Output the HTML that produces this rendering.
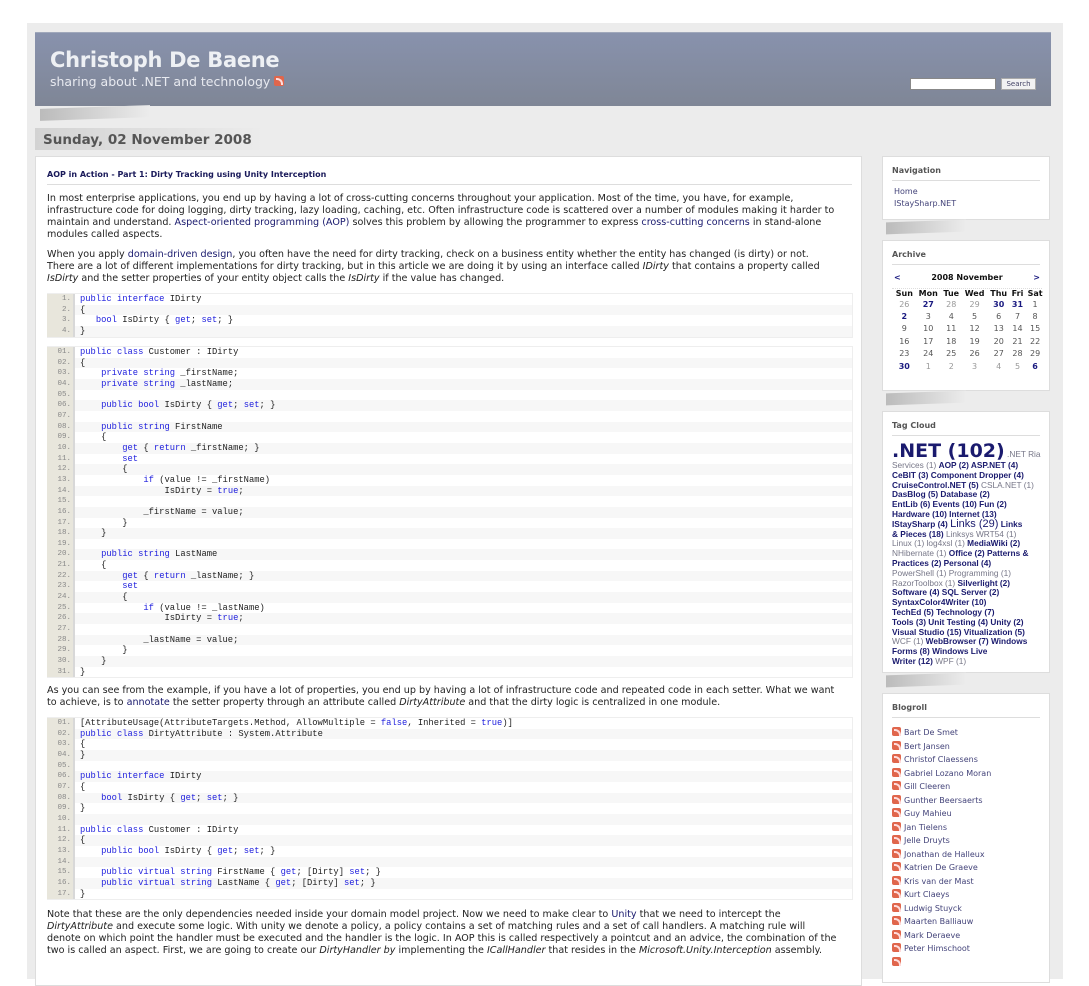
<!DOCTYPE html>
<html><head><meta charset="utf-8"><style>
*{margin:0;padding:0;box-sizing:border-box}
body{width:1089px;height:979px;overflow:hidden;background:#fff;font-family:"DejaVu Sans",Verdana,sans-serif;font-size:10px;color:#222}
#frame{position:absolute;left:27px;top:23px;width:1036px;height:956px;background:#ececec}
#hdr{position:absolute;left:35px;top:32px;width:1016px;height:74px;background:linear-gradient(#8892ad,#7f8696);border-top:1px solid #a0a8bb}
#hdr h1{position:absolute;left:15px;top:15px;font-size:21px;color:#eef0f4;font-weight:bold;letter-spacing:-.3px}
#hdr .sub{position:absolute;left:15px;top:41px;font-size:12.5px;color:#e8eaf0}
.rss{display:inline-block;width:10px;height:10px;background:#e0664c;border-radius:2px;vertical-align:0;position:relative}
.rss:after{content:"";position:absolute;left:2px;top:2px;width:5px;height:5px;border-top:2px solid #fdd;border-right:2px solid #fdd;border-radius:0 6px 0 0}
#sbox{position:absolute;left:910px;top:78px;width:86px;height:12px;background:#fff;border:1px solid #888}
#sbtn{position:absolute;left:1001px;top:78px;width:35px;height:12px;background:#f2f2f2;border:1px solid #aaa;font-size:7px;color:#446;text-align:center;line-height:10px}
.shadow{position:absolute;height:12px;background:linear-gradient(90deg,#bbb,#ddd 70%,#ececec);transform:skewY(-2deg)}
#date{position:absolute;left:35px;top:128px;width:230px;height:22px;background:linear-gradient(90deg,#d3d3d3,#ececec);font-weight:bold;font-size:13.5px;color:#555;padding:4px 0 0 8px}
#post{position:absolute;left:35px;top:156px;width:827px;height:830px;background:#fff;border:1px solid #ddd}
#post h2{position:absolute;left:11px;top:13px;font-size:8px;color:#1a1a5a;font-weight:bold}
#post hr{position:absolute;left:11px;top:27px;width:805px;border:0;border-top:1px solid #ddd}
.p{position:absolute;left:11px;white-space:nowrap;line-height:12px;font-size:9.6px;color:#222}
.p a{color:#1a1a6e;text-decoration:none}
.code{position:absolute;left:11px;width:806px;background:#e8e6dc;border:1px solid #eee;border-left:none;font-family:"Liberation Mono",monospace;font-size:8.8px}
.code div{height:10.67px;line-height:10.67px;white-space:pre;padding-left:33px;position:relative;background:#fff}
.code div:nth-child(even){background:#f7f7f7}
.code div i{position:absolute;left:0;width:28px;padding-right:2px;text-align:right;font-style:normal;color:#888;font-size:7.5px;background:#e8e6dc;height:100%;border-right:2px solid #d8d8d8}
.k{color:#1d1ddd}
.side{position:absolute;left:882px;width:168px;background:#fff;border:1px solid #ddd}
.side h3{font-size:8px;color:#555;font-weight:bold;margin:9px 9px 0;padding-bottom:5px;border-bottom:1px solid #ddd}
.side a{color:#44447a;text-decoration:none}
.nav{font-size:8px;line-height:12px;padding:5px 11px}
.cal{font-size:8px;margin:6px 9px 0;width:150px}
.cal table{border-collapse:collapse;width:152px;margin-left:1px}
.cal td{text-align:center;height:12.4px;color:#555;font-size:8px;padding:0}
.cal th{font-size:8px;color:#111}
.b{color:#1a1a80!important;font-weight:bold}
.g{color:#999!important}
.tags{padding:5px 9px;font-family:"Liberation Sans",Arial,sans-serif;font-size:8.3px;line-height:9.8px;color:#1a1a6e;white-space:nowrap}
.tags b{color:#1a1a6e}
.tags span{color:#778;font-weight:normal}
.blog{padding:8px 9px;font-size:8px;line-height:13.5px}
.blog div{white-space:nowrap;color:#44447a}
.blog .rss{width:9px;height:9px;margin-right:3px;vertical-align:-1px}
</style></head><body>
<div id="frame"></div>
<div id="hdr"><h1>Christoph De Baene</h1><div class="sub">sharing about .NET and technology <span class="rss"></span></div></div>
<div id="sbox"></div><div id="sbtn">Search</div>
<div class="shadow" style="left:40px;top:107px;width:110px"></div>
<div id="date">Sunday, 02 November 2008</div>
<div id="post">
<h2>AOP in Action - Part 1: Dirty Tracking using Unity Interception</h2><hr>
<div class="p" style="top:36px">In most enterprise applications, you end up by having a lot of cross-cutting concerns throughout your application. Most of the time, you have, for example,<br>infrastructure code for doing logging, dirty tracking, lazy loading, caching, etc. Often infrastructure code is scattered over a number of modules making it harder to<br>maintain and understand. <a>Aspect-oriented programming (AOP)</a> solves this problem by allowing the programmer to express <a>cross-cutting concerns</a> in stand-alone<br>modules called aspects.</div>
<div class="p" style="top:92px">When you apply <a>domain-driven design</a>, you often have the need for dirty tracking, check on a business entity whether the entity has changed (is dirty) or not.<br>There are a lot of different implementations for dirty tracking, but in this article we are doing it by using an interface called <i>IDirty</i> that contains a property called<br><i>IsDirty</i> and the setter properties of your entity object calls the <i>IsDirty</i> if the value has changed.</div>
<div class="code" style="top:136px">
<div><i>1.</i><span class="k">public interface</span> IDirty</div>
<div><i>2.</i>{</div>
<div><i>3.</i>   <span class="k">bool</span> IsDirty { <span class="k">get</span>; <span class="k">set</span>; }</div>
<div><i>4.</i>}</div>
</div>
<div class="code" style="top:189px">
<div><i>01.</i><span class="k">public class</span> Customer : IDirty</div>
<div><i>02.</i>{</div>
<div><i>03.</i>    <span class="k">private string</span> _firstName;</div>
<div><i>04.</i>    <span class="k">private string</span> _lastName;</div>
<div><i>05.</i></div>
<div><i>06.</i>    <span class="k">public bool</span> IsDirty { <span class="k">get</span>; <span class="k">set</span>; }</div>
<div><i>07.</i></div>
<div><i>08.</i>    <span class="k">public string</span> FirstName</div>
<div><i>09.</i>    {</div>
<div><i>10.</i>        <span class="k">get</span> { <span class="k">return</span> _firstName; }</div>
<div><i>11.</i>        <span class="k">set</span></div>
<div><i>12.</i>        {</div>
<div><i>13.</i>            <span class="k">if</span> (value != _firstName)</div>
<div><i>14.</i>                IsDirty = <span class="k">true</span>;</div>
<div><i>15.</i></div>
<div><i>16.</i>            _firstName = value;</div>
<div><i>17.</i>        }</div>
<div><i>18.</i>    }</div>
<div><i>19.</i></div>
<div><i>20.</i>    <span class="k">public string</span> LastName</div>
<div><i>21.</i>    {</div>
<div><i>22.</i>        <span class="k">get</span> { <span class="k">return</span> _lastName; }</div>
<div><i>23.</i>        <span class="k">set</span></div>
<div><i>24.</i>        {</div>
<div><i>25.</i>            <span class="k">if</span> (value != _lastName)</div>
<div><i>26.</i>                IsDirty = <span class="k">true</span>;</div>
<div><i>27.</i></div>
<div><i>28.</i>            _lastName = value;</div>
<div><i>29.</i>        }</div>
<div><i>30.</i>    }</div>
<div><i>31.</i>}</div>
</div>
<div class="p" style="top:528px">As you can see from the example, if you have a lot of properties, you end up by having a lot of infrastructure code and repeated code in each setter. What we want<br>to achieve, is to <a>annotate</a> the setter property through an attribute called <i>DirtyAttribute</i> and that the dirty logic is centralized in one module.</div>
<div class="code" style="top:560px">
<div><i>01.</i>[AttributeUsage(AttributeTargets.Method, AllowMultiple = <span class="k">false</span>, Inherited = <span class="k">true</span>)]</div>
<div><i>02.</i><span class="k">public class</span> DirtyAttribute : System.Attribute</div>
<div><i>03.</i>{</div>
<div><i>04.</i>}</div>
<div><i>05.</i></div>
<div><i>06.</i><span class="k">public interface</span> IDirty</div>
<div><i>07.</i>{</div>
<div><i>08.</i>    <span class="k">bool</span> IsDirty { <span class="k">get</span>; <span class="k">set</span>; }</div>
<div><i>09.</i>}</div>
<div><i>10.</i></div>
<div><i>11.</i><span class="k">public class</span> Customer : IDirty</div>
<div><i>12.</i>{</div>
<div><i>13.</i>    <span class="k">public bool</span> IsDirty { <span class="k">get</span>; <span class="k">set</span>; }</div>
<div><i>14.</i></div>
<div><i>15.</i>    <span class="k">public virtual string</span> FirstName { <span class="k">get</span>; [Dirty] <span class="k">set</span>; }</div>
<div><i>16.</i>    <span class="k">public virtual string</span> LastName { <span class="k">get</span>; [Dirty] <span class="k">set</span>; }</div>
<div><i>17.</i>}</div>
</div>
<div class="p" style="top:752px">Note that these are the only dependencies needed inside your domain model project. Now we need to make clear to <a>Unity</a> that we need to intercept the<br><i>DirtyAttribute</i> and execute some logic. With unity we denote a policy, a policy contains a set of matching rules and a set of call handlers. A matching rule will<br>denote on which point the handler must be executed and the handler is the logic. In AOP this is called respectively a pointcut and an advice, the combination of the<br>two is called an aspect. First, we are going to create our <i>DirtyHandler by</i> implementing the <i>ICallHandler</i> that resides in the <i>Microsoft.Unity.Interception</i> assembly.</div>
</div>

<div class="side" style="top:156px;height:64px"><h3>Navigation</h3><div class="nav"><a>Home</a><br><a>IStaySharp.NET</a></div></div>
<div class="shadow" style="left:886px;top:221px;width:80px"></div>
<div class="side" style="top:240px;height:151px"><h3>Archive</h3>
<div class="cal"><div style="display:flex;justify-content:space-between;font-weight:bold;color:#111;padding:0 2px;border-bottom:1px dotted #ddd;height:18px;line-height:14px"><span class="b">&lt;</span><span>2008 November</span><span class="b">&gt;</span></div>
<table><tr><th>Sun</th><th>Mon</th><th>Tue</th><th>Wed</th><th>Thu</th><th>Fri</th><th>Sat</th></tr>
<tr><td class="g">26</td><td class="b">27</td><td class="g">28</td><td class="g">29</td><td class="b">30</td><td class="b">31</td><td>1</td></tr>
<tr><td class="b">2</td><td>3</td><td>4</td><td>5</td><td>6</td><td>7</td><td>8</td></tr>
<tr><td>9</td><td>10</td><td>11</td><td>12</td><td>13</td><td>14</td><td>15</td></tr>
<tr><td>16</td><td>17</td><td>18</td><td>19</td><td>20</td><td>21</td><td>22</td></tr>
<tr><td>23</td><td>24</td><td>25</td><td>26</td><td>27</td><td>28</td><td>29</td></tr>
<tr><td class="b">30</td><td class="g">1</td><td class="g">2</td><td class="g">3</td><td class="g">4</td><td class="g">5</td><td class="b">6</td></tr></table></div></div>
<div class="shadow" style="left:886px;top:392px;width:80px"></div>
<div class="side" style="top:411px;height:262px"><h3>Tag Cloud</h3>
<div class="tags"><b style="font-size:19px;line-height:20px;font-family:'DejaVu Sans',sans-serif">.NET (102)</b> <span>.NET Ria</span><br><span>Services (1)</span> <b>AOP (2) ASP.NET (4)</b><br><b>CeBIT (3) Component Dropper (4)</b><br><b>CruiseControl.NET (5)</b> <span>CSLA.NET (1)</span><br><b>DasBlog (5) Database (2)</b><br><b>EntLib (6) Events (10) Fun (2)</b><br><b>Hardware (10) Internet (13)</b><br><b>IStaySharp (4)</b> <span style="font-size:11px;color:#1a1a6e">Links (29)</span> <b>Links</b><br><b>&amp; Pieces (18)</b> <span>Linksys WRT54 (1)</span><br><span>Linux (1) log4xsl (1)</span> <b>MediaWiki (2)</b><br><span>NHibernate (1)</span> <b>Office (2) Patterns &amp;</b><br><b>Practices (2) Personal (4)</b><br><span>PowerShell (1) Programming (1)</span><br><span>RazorToolbox (1)</span> <b>Silverlight (2)</b><br><b>Software (4) SQL Server (2)</b><br><b>SyntaxColor4Writer (10)</b><br><b>TechEd (5) Technology (7)</b><br><b>Tools (3) Unit Testing (4) Unity (2)</b><br><b>Visual Studio (15) Vitualization (5)</b><br><span>WCF (1)</span> <b>WebBrowser (7) Windows</b><br><b>Forms (8) Windows Live</b><br><b>Writer (12)</b> <span>WPF (1)</span></div></div>
<div class="shadow" style="left:886px;top:674px;width:80px"></div>
<div class="side" style="top:693px;height:290px"><h3>Blogroll</h3>
<div class="blog">
<div><span class="rss"></span>Bart De Smet</div><div><span class="rss"></span>Bert Jansen</div><div><span class="rss"></span>Christof Claessens</div><div><span class="rss"></span>Gabriel Lozano Moran</div><div><span class="rss"></span>Gill Cleeren</div><div><span class="rss"></span>Gunther Beersaerts</div><div><span class="rss"></span>Guy Mahieu</div><div><span class="rss"></span>Jan Tielens</div><div><span class="rss"></span>Jelle Druyts</div><div><span class="rss"></span>Jonathan de Halleux</div><div><span class="rss"></span>Katrien De Graeve</div><div><span class="rss"></span>Kris van der Mast</div><div><span class="rss"></span>Kurt Claeys</div><div><span class="rss"></span>Ludwig Stuyck</div><div><span class="rss"></span>Maarten Balliauw</div><div><span class="rss"></span>Mark Deraeve</div><div><span class="rss"></span>Peter Himschoot</div><div><span class="rss"></span></div>
</div></div>
</body></html>
